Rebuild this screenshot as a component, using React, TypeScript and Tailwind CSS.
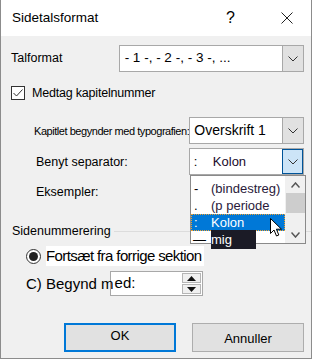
import React from "react";

const font = { fontFamily: '"Liberation Sans", Arial, sans-serif' };

const Chevron = ({ className = "" }: { className?: string }) => (
  <svg width="10" height="6" viewBox="0 0 10 6" className={className}>
    <path d="M0.5 0.5 L5 5 L9.5 0.5" fill="none" stroke="#333" strokeWidth="1" />
  </svg>
);

const Select = ({
  value,
  width,
  active = false,
}: {
  value: React.ReactNode;
  width: string;
  active?: boolean;
}) => (
  <div className={`flex h-[27px] ${width} border border-[#a8a8a8] bg-white`}>
    <div className="flex flex-1 items-center pl-[4px] text-[13px] text-black">{value}</div>
    <div
      className={
        active
          ? "flex w-[21px] items-center justify-center border border-[#005499] bg-[#cce4f7]"
          : "flex w-[21px] items-center justify-center border-l border-[#a8a8a8] bg-[#e1e1e1]"
      }
    >
      <Chevron />
    </div>
  </div>
);

export default function App() {
  return (
    <div
      className="relative flex h-[359px] w-[312px] flex-col overflow-hidden border-x border-b border-[#8c8c8c] bg-[#f0f0f0] text-black"
      style={font}
    >
      {/* title bar */}
      <div className="flex h-[36px] shrink-0 items-center bg-white pl-[11px] pr-[18px]">
        <span className="flex-1 text-[13.5px]">Sidetalsformat</span>
        <span className="mr-[46px] text-[16px] font-light">?</span>
        <svg width="12" height="12" viewBox="0 0 12 12">
          <path d="M0.5 0.5 L11.5 11.5 M11.5 0.5 L0.5 11.5" stroke="#222" strokeWidth="1" />
        </svg>
      </div>

      {/* Talformat */}
      <div className="mt-[9px] flex h-[27px] items-center pl-[10px] pr-[7px]">
        <span className="w-[108px] text-[12.5px]">Talformat</span>
        <Select
          width="w-[186px]"
          value={<span className="pl-[1px] text-[13.5px]">- 1 -, - 2 -, - 3 -, ...</span>}
        />
      </div>

      {/* Medtag */}
      <div className="mt-[14px] flex h-[14px] items-center pl-[10px]">
        <div className="flex h-[14px] w-[14px] items-center justify-center border border-[#333] bg-white">
          <svg width="10" height="8" viewBox="0 0 10 8">
            <path d="M0.5 4 L3.5 7 L9.5 0.5" fill="none" stroke="#333" strokeWidth="1" />
          </svg>
        </div>
        <span className="ml-[7px] text-[12.5px] leading-[14px] tracking-[-0.2px]">
          Medtag kapitelnummer
        </span>
      </div>

      {/* Kapitlet */}
      <div className="mt-[17px] flex h-[27px] items-center pr-[7px]">
        <span className="ml-[33px] w-[156px] whitespace-nowrap pt-[2px] text-[11px] tracking-[-0.45px]">
          Kapitlet begynder med typografien:
        </span>
        <Select width="w-[116px]" value={<span className="text-[14px]">Overskrift 1</span>} />
      </div>

      {/* Benyt */}
      <div className="mt-[4px] flex h-[27px] items-center pr-[7px]">
        <span className="ml-[35px] w-[154px] pt-[2px] text-[12.5px]">Benyt separator:</span>
        <Select
          width="w-[116px]"
          active
          value={
            <span className="flex text-[13px]">
              <span className="w-[19px]">:</span>
              <span className="text-[#1a0a2a]">Kolon</span>
            </span>
          }
        />
      </div>

      {/* Eksempler */}
      <div className="mt-[8px] h-[18px] pl-[35px] text-[12.5px] leading-[18px]">Eksempler:</div>

      {/* Sidenummerering group */}
      <div className="mt-[22px] flex h-[16px] items-center pl-[11px]">
        <span className="text-[12.5px] leading-[16px]">Sidenummerering</span>
        <div className="ml-[3px] h-px flex-1 bg-[#dcdcdc]" />
      </div>

      <div className="mt-[6px] flex h-[22px] items-center pl-[25px]">
        <div className="flex h-[15px] w-[15px] items-center justify-center rounded-full border border-[#333] bg-white">
          <div className="h-[9px] w-[9px] rounded-full bg-[#222]" />
        </div>
        <span className="ml-[5px] bg-white pr-[2px] text-[15px] leading-[20px] tracking-[-0.6px]">
          Fortsæt fra forrige sektion
        </span>
      </div>

      <div className="mt-[4px] flex h-[25px] items-center">
        <span className="relative z-10 ml-[25px] whitespace-nowrap text-[15px] leading-[20px]">
          C) Begynd m
        </span>
        <div className="ml-[-4px] flex h-[25px] w-[93px] border border-[#a8a8a8] bg-white">
          <span className="flex-1 pl-[4px] text-[15px] leading-[22px]">ed:</span>
          <div className="my-[1px] mr-[1px] flex w-[19px] flex-col gap-[1px]">
            <div className="flex flex-1 items-center justify-center border border-[#b5b5b5] bg-[#f0f0f0]">
              <svg width="9" height="5" viewBox="0 0 9 5">
                <path d="M4.5 0 L9 5 L0 5 Z" fill="#111" />
              </svg>
            </div>
            <div className="flex flex-1 items-center justify-center border border-[#b5b5b5] bg-[#f0f0f0]">
              <svg width="9" height="5" viewBox="0 0 9 5">
                <path d="M0 0 L9 0 L4.5 5 Z" fill="#111" />
              </svg>
            </div>
          </div>
        </div>
      </div>

      {/* buttons */}
      <div className="mt-auto mb-[6px] flex justify-end gap-[16px] pr-[7px]">
        <button className="h-[29px] w-[112px] border-2 border-[#0078d7] bg-[#e1e1e1] pb-[3px] text-[13px]">
          OK
        </button>
        <button className="h-[29px] w-[112px] border border-[#adadad] bg-[#e1e1e1] pt-[3px] text-[13px]">
          Annuller
        </button>
      </div>

      {/* open dropdown list */}
      <div className="absolute left-[189px] top-[175px] flex h-[69px] w-[116px] border border-[#8a8a8a] bg-white text-[13px]">
        <div className="flex flex-1 flex-col pt-[4px]">
          <div className="flex h-[17px] items-center">
            <span className="w-[20px] pl-[3px]">-</span>
            <span className="text-[#2a1a3a]">(bindestreg)</span>
          </div>
          <div className="flex h-[17px] items-center">
            <span className="w-[20px] pl-[3px]">.</span>
            <span className="text-[#2a1a3a]">(p periode</span>
          </div>
          <div className="flex h-[17px] items-center border border-dotted border-[#f0a030] bg-[#0078d7] text-white">
            <span className="w-[19px] pl-[2px]">:</span>
            <span>Kolon</span>
          </div>
          <div className="flex h-[17px] items-center">
            <span className="w-[20px] pl-[2px]">—</span>
            <span className="bg-[#1b1b26] pr-[24px] text-white">mig</span>
          </div>
        </div>
        <div className="flex w-[20px] flex-col items-center bg-[#f0f0f0]">
          <div className="flex h-[17px] items-center">
            <svg width="9" height="6" viewBox="0 0 9 6">
              <path d="M0.5 5.5 L4.5 1 L8.5 5.5" fill="none" stroke="#555" strokeWidth="1.5" />
            </svg>
          </div>
          <div className="h-[20px] w-[19px] bg-[#cdcdcd]" />
          <div className="mt-auto flex h-[17px] items-center">
            <svg width="9" height="6" viewBox="0 0 9 6">
              <path d="M0.5 0.5 L4.5 5 L8.5 0.5" fill="none" stroke="#555" strokeWidth="1.5" />
            </svg>
          </div>
        </div>
      </div>

      {/* mouse cursor */}
      <svg className="absolute left-[269px] top-[218px]" width="13" height="20" viewBox="0 0 13 20">
        <path
          d="M0.5 0.5 L0.5 15.5 L4 12 L6.5 18 L8.8 17 L6.4 11.2 L11.5 11.2 Z"
          fill="white"
          stroke="black"
          strokeWidth="1"
        />
      </svg>
    </div>
  );
}
